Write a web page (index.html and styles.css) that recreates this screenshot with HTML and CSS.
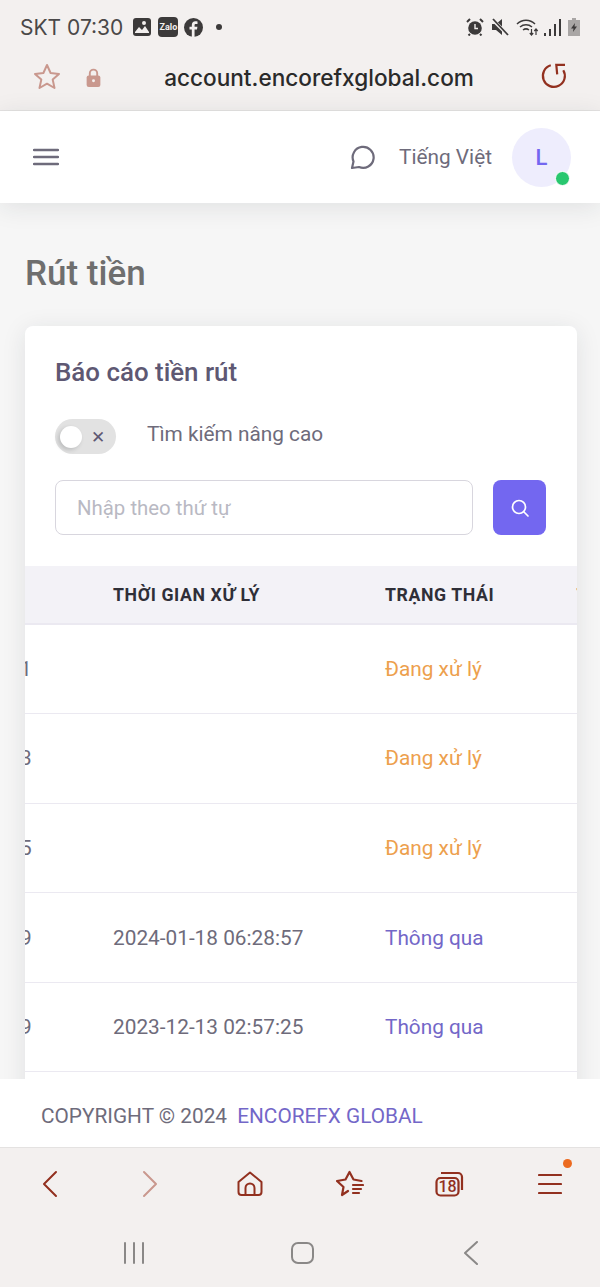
FILE: index.html
```html
<!DOCTYPE html>
<html lang="vi">
<head>
  <meta charset="UTF-8">
  <title>Rút tiền</title>
  <link rel="stylesheet" href="styles.css">
</head>
<body>

<div class="status-bar">
  <span class="carrier">SKT 07:30</span>
  <svg class="st-img" viewBox="0 0 18 18"><path fill-rule="evenodd" fill="#3c3a3a" d="M3 0h12a3 3 0 0 1 3 3v12a3 3 0 0 1-3 3H3a3 3 0 0 1-3-3V3a3 3 0 0 1 3-3z"/><path fill="#f3f0ef" d="M2 14l4-5 3 3 3-4 4 6v1H2zM11 3a2 2 0 1 1 0 4 2 2 0 0 1 0-4z"/></svg>
  <span class="st-zalo">Zalo</span>
  <svg class="st-fb" viewBox="0 0 18 18"><circle cx="9" cy="9" r="9" fill="#3c3a3a"/><path fill="#f3f0ef" d="M10 18v-7h2.3l.4-2.6H10V6.900c0-.8.3-1.300 1.400-1.300h1.400V3.300c-.6-.1-1.300-.2-2-.2-2.100 0-3.400 1.300-3.400 3.500v1.800H5.200V11h2.200v7z"/></svg>
  <span class="st-dot"></span>
  <span class="st-space"></span>
  <svg class="st-alarm" viewBox="0 0 18 18"><circle cx="9" cy="10" r="6.800" fill="#3c3a3a"/><path d="M1 4l3-3M17 4l-3-3M4 16l-1.500 1.500M14 16l1.500 1.500" stroke="#3c3a3a" stroke-width="2" fill="none"/><path d="M9 6v4.500h3" stroke="#f3f0ef" stroke-width="1.400" fill="none"/></svg>
  <svg class="st-mute" viewBox="0 0 18 18"><path fill="#3c3a3a" d="M1 6h4l6-5v16l-6-5H1z"/><path d="M1 1l16 16" stroke="#f3f0ef" stroke-width="3.500"/><path d="M2 1l15 16" stroke="#3c3a3a" stroke-width="1.800"/></svg>
  <svg class="st-wifi" viewBox="0 0 23 18" fill="none" stroke="#3c3a3a" stroke-width="1.500"><path d="M1 6c5-5 13-5 18 0M4 9c3.500-3 8.500-3 12 0M7 12c2-1.500 4-1.500 6 0"/><path d="M10 14.500v.1" stroke-width="2"/><path d="M15.500 11v6M13.800 15l1.700 2 1.700-2M20 17v-6M18.300 13l1.700-2 1.700 2" stroke-width="1.200"/></svg>
  <svg class="st-signal" viewBox="0 0 17 17" fill="#3c3a3a"><rect x="0" y="14" width="2" height="3"/><rect x="5" y="10" width="2" height="7"/><rect x="10" y="5" width="2" height="12"/><rect x="15" y="0" width="2" height="17"/></svg>
  <svg class="st-battery" viewBox="0 0 12 18"><path fill="#a9a6a5" d="M4 0h4v2h4v16H0V2h4z"/><path fill="#3c3a3a" d="M7 5L3 10.500h2.500L5 14l4-5.500H6.500z"/></svg>
</div>

<div class="url-bar">
  <svg class="url-star" viewBox="0 0 28 28" fill="none" stroke="#c9988e" stroke-width="2" stroke-linejoin="round"><path d="M14 2l3.600 8 8.400.9-6.300 5.700 1.800 8.400-7.500-4.300-7.500 4.300 1.800-8.400L2 10.900l8.400-.9z"/></svg>
  <svg class="url-lock" viewBox="0 0 14 18"><path d="M3.500 8V5a3.500 3.500 0 0 1 7 0v3" fill="none" stroke="#c9988e" stroke-width="1.800"/><rect x="0.500" y="7" width="13" height="11" rx="2" fill="#c9988e"/><circle cx="7" cy="12" r="1.400" fill="#f3f0ef"/></svg>
  <span class="url-text">account.encorefxglobal.com</span>
  <svg class="url-reload" viewBox="0 0 28 28" fill="none" stroke="#92301f" stroke-width="2.200"><path d="M11.800 2.300A11 11 0 1 0 24.300 7.200"/><path d="M26 1.800h-8.700l.9 9.600"/></svg>
</div>

<header class="topnav">
  <svg class="burger" viewBox="0 0 26 18" fill="none" stroke="#6e6b7b" stroke-width="2.300" stroke-linecap="round"><path d="M1 2h24M1 9h24M1 16h24"/></svg>
  <svg class="chat" viewBox="0 0 26 26" fill="none" stroke="#6e6b7b" stroke-width="2.200" stroke-linejoin="round"><path d="M2 24l1.500-6.500A10.500 10.500 0 1 1 9 23z"/></svg>
  <span class="lang">Tiếng Việt</span>
  <div class="avatar">L<span class="online"></span></div>
</header>

<main class="content">
  <h1 class="page-title">Rút tiền</h1>
  <section class="card">
    <h2 class="card-title">Báo cáo tiền rút</h2>
    <div class="toggle-row">
      <div class="toggle"><span class="knob"></span><span class="toggle-x">✕</span></div>
      <span class="toggle-label">Tìm kiếm nâng cao</span>
    </div>
    <div class="search-row">
      <input class="search-input" type="text" placeholder="Nhập theo thứ tự">
      <button class="search-btn" type="button">
        <svg viewBox="0 0 20 20" fill="none" stroke="#fff" stroke-width="1.700" stroke-linecap="round"><circle cx="9" cy="9" r="6.500"/><path d="M14 14l4 4"/></svg>
      </button>
    </div>
    <div class="table-wrap">
      <table class="report">
        <thead>
          <tr><th></th><th>THỜI GIAN XỬ LÝ</th><th>TRẠNG THÁI</th><th>T</th></tr>
        </thead>
        <tbody>
          <tr><td class="cut">1</td><td></td><td class="pending">Đang xử lý</td><td></td></tr>
          <tr><td class="cut">3</td><td></td><td class="pending">Đang xử lý</td><td></td></tr>
          <tr><td class="cut">5</td><td></td><td class="pending">Đang xử lý</td><td></td></tr>
          <tr><td class="cut">9</td><td>2024-01-18 06:28:57</td><td class="passed">Thông qua</td><td></td></tr>
          <tr><td class="cut">9</td><td>2023-12-13 02:57:25</td><td class="passed">Thông qua</td><td></td></tr>
        </tbody>
      </table>
    </div>
  </section>
</main>

<footer class="copyright">COPYRIGHT © 2024 <a class="brand">ENCOREFX GLOBAL</a></footer>

<nav class="toolbar">
  <svg viewBox="0 0 16 28" class="tb-arrow" fill="none" stroke="#92301f" stroke-width="2" stroke-linecap="round" stroke-linejoin="round"><path d="M14 2L2 14l12 12"/></svg>
  <svg viewBox="0 0 16 28" class="tb-arrow" fill="none" stroke="#c9988e" stroke-width="2" stroke-linecap="round" stroke-linejoin="round"><path d="M2 2l12 12L2 26"/></svg>
  <svg viewBox="0 0 26 26" class="tb-home" fill="none" stroke="#92301f" stroke-width="2" stroke-linejoin="round"><path d="M1.500 11L13 1.500 24.500 11v10a3 3 0 0 1-3 3h-17a3 3 0 0 1-3-3z"/><path d="M8.500 24v-7a4.500 4.500 0 0 1 9 0v7"/></svg>
  <svg viewBox="0 0 28 27" class="tb-star" fill="none" stroke="#92301f" stroke-width="2.200" stroke-linejoin="round" stroke-linecap="round"><path d="M12 21l-6 4 1.500-8L1 11l8.500-1.500L13.500 2l4 7.500 8 1.500"/><path d="M17 15h10M17 19h8M17 23h6"/></svg>
  <svg viewBox="0 0 30 26" class="tb-tabs" fill="none" stroke="#92301f" stroke-width="2.200"><path d="M6 2h17a4 4 0 0 1 4 4v13"/><rect x="1.500" y="7" width="22" height="17.500" rx="4"/><text x="12.500" y="21" class="tb-count">18</text></svg>
  <div class="tb-menu">
    <svg viewBox="0 0 24 22" fill="none" stroke="#92301f" stroke-width="2.200" stroke-linecap="round"><path d="M1 2h22M1 11h22M1 20h22"/></svg>
    <span class="tb-badge"></span>
  </div>
</nav>

<div class="sys-nav">
  <svg viewBox="0 0 22 22" class="sys-bars" fill="none" stroke="#8a8887" stroke-width="2" stroke-linecap="round"><path d="M2 1v20M11 1v20M20 1v20"/></svg>
  <svg viewBox="0 0 23 22" class="sys-home" fill="none" stroke="#8a8887" stroke-width="2"><rect x="1" y="1" width="21" height="20" rx="6"/></svg>
  <svg viewBox="0 0 14 24" class="sys-back" fill="none" stroke="#8a8887" stroke-width="2" stroke-linecap="round" stroke-linejoin="round"><path d="M13 1L1 12l12 11"/></svg>
</div>

</body>
</html>
```

FILE: styles.css
```css
* { box-sizing: border-box; }
html, body { margin:0; padding:0; }
body { width:600px; height:1287px; display:flex; flex-direction:column; overflow:hidden; font-family:Roboto, Arial, sans-serif; background:#f6f6f6; color:#6e6b7b; }

/* phone status bar */
.status-bar { height:44px; padding:10px 20px 0; background:#f3f0ef; display:flex; align-items:center; flex:none; }
.carrier { font-family:Inter, sans-serif; font-size:21px; color:#4a4848; margin-right:10px; }
.st-img { width:18px; height:18px; margin-right:7px; }
.st-zalo { width:20px; height:20px; margin-right:6px; border-radius:4px; background:#3c3a3a; color:#f3f0ef; font-size:9px; font-weight:700; line-height:20px; text-align:center; }
.st-fb { width:19px; height:19px; }
.st-dot { width:6px; height:6px; margin-left:13px; border-radius:50%; background:#3c3a3a; }
.st-space { flex:1; }
.st-alarm { width:18px; height:18px; margin-right:7px; }
.st-mute { width:18px; height:18px; margin-right:7px; }
.st-wifi { width:23px; height:18px; margin-right:5px; }
.st-signal { width:17px; height:17px; margin-right:7px; }
.st-battery { width:12px; height:18px; }

/* browser url bar */
.url-bar { height:67px; padding:0 33px; background:#f3f0ef; border-bottom:1px solid #e4e2e1; display:flex; align-items:center; flex:none; }
.url-star { width:28px; height:28px; margin-right:25px; }
.url-lock { width:15px; height:19px; }
.url-text { flex:1; text-align:center; font-family:Inter, sans-serif; font-size:22.600px; font-weight:500; color:#2a2a2a; padding-right:2px; white-space:nowrap; }
.url-reload { width:28px; height:28px; }

/* app header */
.topnav { height:92px; padding:0 29px 0 33px; background:#fff; box-shadow:0 4px 24px rgba(34,41,47,.1); display:flex; align-items:center; flex:none; position:relative; z-index:2; }
.burger { width:26px; height:18px; margin-right:auto; }
.chat { width:26px; height:26px; margin-right:23px; }
.lang { font-size:20.800px; margin-right:20px; }
.avatar { width:59px; height:59px; border-radius:50%; background:#eeedfd; color:#7367f0; font-size:22px; font-weight:500; line-height:59px; text-align:center; position:relative; }
.online { position:absolute; right:1px; bottom:1px; width:15px; height:15px; border-radius:50%; background:#28c76f; border:1px solid #fff; }

/* page */
.content { flex:1; min-height:0; padding:0 23px 0 25px; overflow:hidden; background:#f6f6f6; }
.page-title { margin:50px 0 31px; font-size:35px; line-height:42px; font-weight:500; color:#6e6e6e; }
.card { height:800px; background:#fff; border-radius:8px; box-shadow:0 4px 24px rgba(34,41,47,.1); }
.card-title { margin:0; padding:30px 30px 0; font-size:25.900px; line-height:32px; font-weight:500; color:#5e5873; }
.toggle-row { margin:31px 30px 0; display:flex; align-items:center; }
.toggle { width:61px; height:35px; border-radius:18px; background:#e2e2e2; display:flex; align-items:center; padding-left:5px; }
.knob { width:22px; height:22px; border-radius:50%; background:#fff; box-shadow:-2px 2px 4px rgba(34,41,47,.2); }
.toggle-x { margin-left:9px; font-size:17px; color:#5e5873; }
.toggle-label { margin-left:31px; font-size:20.800px; color:#6e6b7b; position:relative; top:-3px; }
.search-row { margin:26px 31px 0 30px; display:flex; gap:20px; }
.search-input { flex:1; min-width:0; height:55px; padding:0 21px; border:1px solid #d8d6de; border-radius:8px; font-family:Roboto, Arial, sans-serif; font-size:20.400px; color:#6e6b7b; background:#fff; }
.search-input::placeholder { color:#b9b9c3; opacity:1; }
.search-btn { width:53px; height:55px; border:0; padding:0; border-radius:8px; background:#7367f0; display:flex; align-items:center; justify-content:center; }
.search-btn svg { width:20px; height:20px; }

/* table is scrolled sideways in the original, so it is clipped here */
.table-wrap { margin-top:31px; overflow:hidden; }
.report { width:600px; table-layout:fixed; border-collapse:collapse; font-size:20.800px; }
.report th:nth-child(1) { width:88px; }
.report th:nth-child(2) { width:272px; }
.report th:nth-child(3) { width:191.500px; }
.report th { height:58px; padding:0; background:#f3f2f7; border-bottom:2px solid #ebe9f1; text-align:left; font-size:17.700px; font-weight:700; letter-spacing:.6px; color:#2f2f38; }
.report td { height:89.600px; padding:0; border-bottom:1px solid #ebe9f1; color:#6e6b7b; white-space:nowrap; }
.report td.cut { text-indent:-5px; }
.report td.pending { color:#eda04d; }
.report td.passed { color:#7367c8; }

/* footer */
.copyright { height:69px; padding-left:41px; background:#fff; border-bottom:1px solid #e4e2e1; font-size:20.800px; line-height:74px; color:#6e6b7b; flex:none; position:relative; z-index:1; white-space:pre-wrap; }
.brand { color:#7367c8; margin-left:5px; }

/* browser toolbar */
.toolbar { height:71px; background:#f3f0ef; display:grid; grid-template-columns:repeat(6, 100px); justify-items:center; align-items:center; flex:none; }
.tb-arrow { width:16px; height:28px; }
.tb-home { width:26px; height:26px; }
.tb-star { width:28px; height:27px; }
.tb-tabs { width:30px; height:26px; }
.tb-count { font-family:Roboto, Arial, sans-serif; font-size:16px; font-weight:500; fill:#92301f; stroke:none; text-anchor:middle; }
.tb-menu { width:24px; height:22px; position:relative; }
.tb-menu svg { display:block; width:24px; height:22px; }
.tb-badge { position:absolute; left:25px; top:-14px; width:9px; height:9px; border-radius:50%; background:#ec6a1f; }

/* android nav */
.sys-nav { height:68px; padding:0 45px 0 50px; background:#f3f0ef; display:grid; grid-template-columns:repeat(3, 168px); justify-items:center; align-items:center; flex:none; }
.sys-bars { width:22px; height:22px; }
.sys-home { width:23px; height:22px; }
.sys-back { width:14px; height:24px; margin-left:2px; }
```
